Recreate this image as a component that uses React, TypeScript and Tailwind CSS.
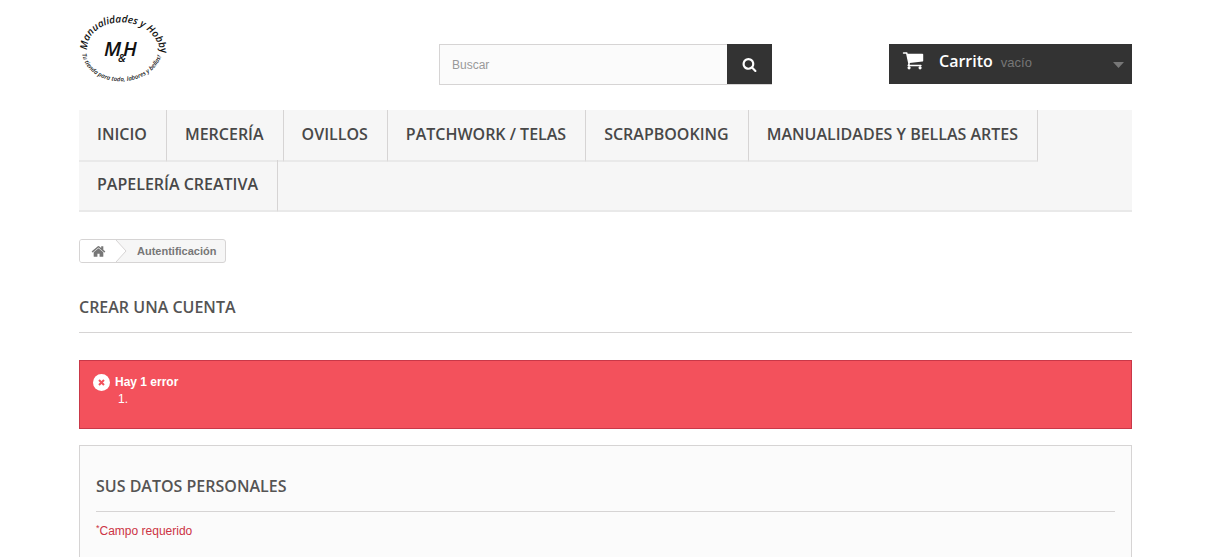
const menuItems = [
  "Inicio",
  "Mercería",
  "Ovillos",
  "Patchwork / Telas",
  "Scrapbooking",
  "Manualidades y Bellas Artes",
  "Papelería Creativa",
];

const icons = {
  cart: "M704 1536q0 52-38 90t-90 38-90-38-38-90 38-90 90-38 90 38 38 90zm896 0q0 52-38 90t-90 38-90-38-38-90 38-90 90-38 90 38 38 90zm128-1088v512q0 24-16.500 42.500t-40.500 21.500l-1044 122q13 60 13 70 0 16-24 64h920q26 0 45 19t19 45-19 45-45 19h-1024q-26 0-45-19t-19-45q0-11 8-31.500t16-36 21.500-40 15.500-29.500l-177-823h-204q-26 0-45-19t-19-45 19-45 45-19h256q16 0 28.500 6.500t19.500 15.500 13 24.500 8 26 5.500 29.500 4.500 26h1201q26 0 45 19t19 45z",
  home: "M1472 992v480q0 26-19 45t-45 19h-384v-384h-256v384h-384q-26 0-45-19t-19-45v-480q0-1 .5-3t.5-3l575-474 575 474q1 2 1 6zm223-69l-62 74q-8 9-21 11h-3q-13 0-21-7l-692-577-692 577q-12 8-24 7-13-2-21-11l-62-74q-8-10-7-23.500t11-21.500l719-599q32-26 76-26t76 26l244 204v-195q0-14 9-23t23-9h192q14 0 23 9t9 23v408l219 182q10 8 11 21.500t-7 23.500z",
  search: "M1216 832q0-185-131.500-316.500t-316.500-131.500-316.500 131.500-131.500 316.500 131.500 316.500 316.500 131.500 316.500-131.500 131.500-316.500zm512 832q0 52-38 90t-90 38q-54 0-90-38l-343-342q-179 124-399 124-143 0-273.500-55.500t-225-150-150-225-55.500-273.500 55.500-273.500 150-225 225-150 273.500-55.500 273.500 55.500 225 150 150 225 55.500 273.500q0 220-124 399l343 343q37 37 37 90z",
};

function Icon({ name, className }: { name: keyof typeof icons; className: string }) {
  return (
    <svg viewBox="0 0 1792 1792" fill="currentColor" className={className}>
      <path d={icons[name]} />
    </svg>
  );
}

function Logo() {
  return (
    <a href="#" aria-label="Manualidades y Hobby">
      <svg width="90" height="72" viewBox="0 0 90 72" className="block overflow-visible" fill="#111">
        <defs>
          <path id="ring-top" d="M8 38 C8 2 76 -1 82 42" />
          <path id="ring-bottom" d="M3 42 C10 79 76 79 84 38" />
        </defs>
        <g fontFamily="'Open Sans', sans-serif" fontStyle="italic" fontWeight="600">
          <text fontSize="10">
            <textPath href="#ring-top">Manualidades y Hobby</textPath>
          </text>
          <text fontSize="6">
            <textPath href="#ring-bottom">Tu tienda para todo, labores y bellas!</textPath>
          </text>
        </g>
        <g fontFamily="'Open Sans', sans-serif" fontStyle="italic" fontWeight="600">
          <text x="25" y="44" fontSize="20">M</text>
          <text x="44" y="44" fontSize="20">H</text>
          <text x="39" y="50" fontSize="11">&amp;</text>
        </g>
      </svg>
    </a>
  );
}

function SearchBox() {
  return (
    <form className="flex h-[41px] w-[333px]" onSubmit={(e) => e.preventDefault()}>
      <input
        type="text"
        aria-label="Buscar"
        placeholder="Buscar"
        className="min-w-0 flex-1 border border-r-0 border-[#d6d4d4] bg-[#fbfbfb] px-3 text-xs placeholder:text-[#999]"
      />
      <button
        type="submit"
        aria-label="Buscar"
        className="flex h-[41px] w-[45px] items-center justify-center border-b border-[#d6d4d4] bg-[#333] bg-clip-padding text-white"
      >
        <Icon name="search" className="size-[15px]" />
      </button>
    </form>
  );
}

function Cart() {
  return (
    <a href="#" className="flex h-10 w-[243px] bg-[#333] pr-2 pl-[13px] text-white">
      <Icon name="cart" className="mt-[5px] size-[22px]" />
      <b className="ml-[15px] font-['Open_Sans',sans-serif] text-base leading-[34px] font-semibold">Carrito</b>
      <span className="ml-2 text-[13px] leading-[38px] text-[#777]">vacío</span>
      <svg width="11" height="6" viewBox="0 0 11 6" className="mt-[18px] ml-auto" fill="#777">
        <path d="M0 0 H11 L5.500 6 Z" />
      </svg>
    </a>
  );
}

function Menu() {
  return (
    <nav className="mt-[25px] border-b-2 border-[#e9e9e9] bg-[#f6f6f6]">
      <ul className="-mb-0.5 flex flex-wrap">
        {menuItems.map((item) => (
          <li key={item} className="not-last:-mb-0.5">
            <a
              href="#"
              className="block h-[52px] border-r border-b-2 border-r-[#d6d4d4] border-b-[#e9e9e9] pt-[13px] pr-[19px] pl-[18px] font-['Open_Sans',sans-serif] text-base leading-[22px] font-semibold text-[#484848] uppercase"
            >
              {item}
            </a>
          </li>
        ))}
      </ul>
    </nav>
  );
}

function Breadcrumb() {
  return (
    <nav
      aria-label="Ruta"
      className="mt-[27px] flex h-6 w-fit items-stretch overflow-hidden rounded-[3px] border border-[#d6d4d4] bg-[#f6f6f6] text-[11px] font-bold text-[#777]"
    >
      <a href="#" aria-label="Inicio" className="flex w-9 items-center justify-center bg-white">
        <Icon name="home" className="size-[15px]" />
      </a>
      <svg width="12" height="22" viewBox="0 0 12 22" className="block">
        <path d="M0 0 L10 11 L0 22 Z" fill="#fff" />
        <path d="M0 0 L10 11 L0 22" fill="none" stroke="#d6d4d4" />
      </svg>
      <span className="px-[9px] leading-[22px]">Autentificación</span>
    </nav>
  );
}

function ErrorAlert() {
  return (
    <div role="alert" className="mt-[27px] h-[69px] border border-[#c93848] bg-[#f3515c] px-[13px] pt-3 text-xs text-white">
      <div className="flex h-[18px] items-center gap-[5px]">
        <svg width="17" height="17" viewBox="0 0 17 17">
          <circle cx="8.500" cy="8.500" r="8.500" fill="#fff" />
          <path d="M6 6 L11 11 M11 6 L6 11" stroke="#f3515c" strokeWidth="2" />
        </svg>
        <p className="font-bold">Hay 1 error</p>
      </div>
      <p className="ml-[25px] leading-4">1.</p>
    </div>
  );
}

export default function App() {
  return (
    <div className="h-screen overflow-hidden bg-white pr-[81px] pl-[79px] font-['Liberation_Sans',Arial,sans-serif] text-xs text-[#777]">
      <header className="flex items-start justify-between pt-3">
        <div className="w-[243px]">
          <Logo />
        </div>
        <div className="mt-8">
          <SearchBox />
        </div>
        <div className="mt-8">
          <Cart />
        </div>
      </header>
      <Menu />
      <main>
        <Breadcrumb />
        <h1 className="mt-[33px] border-b border-[#d6d4d4] pb-[14px] font-['Open_Sans',sans-serif] text-base leading-[22px] font-semibold text-[#555454] uppercase">
          Crear una cuenta
        </h1>
        <ErrorAlert />
        <section className="mt-4 h-80 border border-[#d6d4d4] bg-[#fbfbfb] px-4 pt-[29px]">
          <h2 className="border-b border-[#d6d4d4] pb-[14px] font-['Open_Sans',sans-serif] text-base leading-[22px] font-semibold text-[#555454] uppercase">
            Sus datos personales
          </h2>
          <p className="mt-2.5 leading-[18px] text-[#cc3344]">
            <sup>*</sup>Campo requerido
          </p>
        </section>
      </main>
    </div>
  );
}
